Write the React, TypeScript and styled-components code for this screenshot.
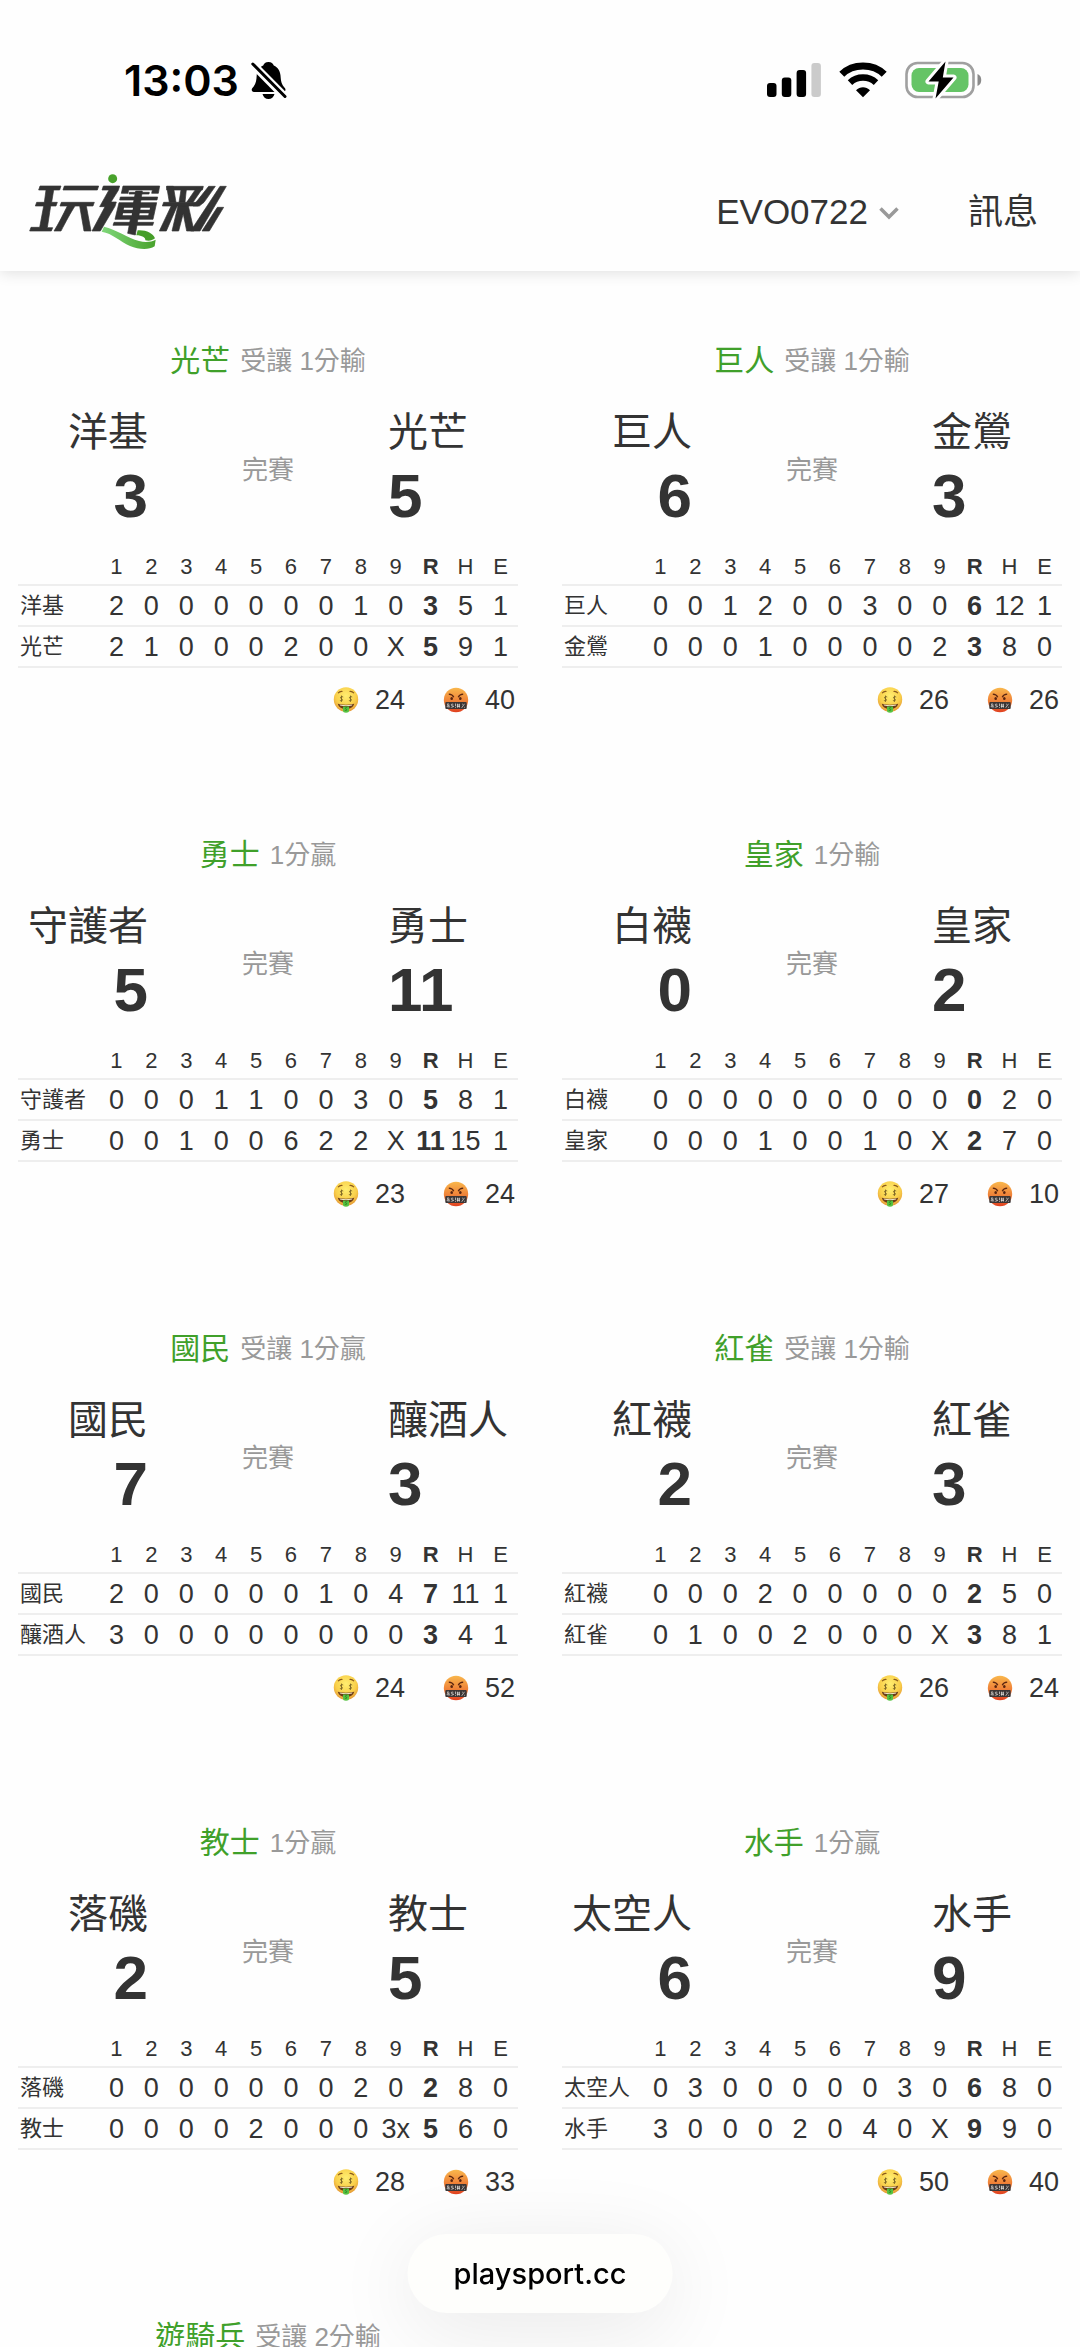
import React from "react";
import styled, { createGlobalStyle } from "styled-components";

const GlobalStyle = createGlobalStyle`
  *, *::before, *::after { box-sizing: border-box; }
  body {
    margin: 0;
    background: #fefefe;
    color: #333;
    font-family: "Liberation Sans", "Noto Sans CJK TC", sans-serif;
  }
  button { font: inherit; color: inherit; border: 0; padding: 0; background: none; cursor: pointer; }
  a { color: inherit; text-decoration: none; }
  svg { display: block; }
`;

/* ---------- data ---------- */

type Line = { team: string; innings: string[]; rhe: [string, string, string] };
type Game = {
  pick: string;
  spread: string;
  away?: Line;
  home?: Line;
  wins?: number;
  losses?: number;
};

const line = (team: string, innings: string, rhe: string): Line => ({
  team,
  innings: innings.split(" "),
  rhe: rhe.split(" ") as [string, string, string],
});

const games: Game[] = [
  {
    pick: "光芒", spread: "受讓 1分輸", wins: 24, losses: 40,
    away: line("洋基", "2 0 0 0 0 0 0 1 0", "3 5 1"),
    home: line("光芒", "2 1 0 0 0 2 0 0 X", "5 9 1"),
  },
  {
    pick: "巨人", spread: "受讓 1分輸", wins: 26, losses: 26,
    away: line("巨人", "0 0 1 2 0 0 3 0 0", "6 12 1"),
    home: line("金鶯", "0 0 0 1 0 0 0 0 2", "3 8 0"),
  },
  {
    pick: "勇士", spread: "1分贏", wins: 23, losses: 24,
    away: line("守護者", "0 0 0 1 1 0 0 3 0", "5 8 1"),
    home: line("勇士", "0 0 1 0 0 6 2 2 X", "11 15 1"),
  },
  {
    pick: "皇家", spread: "1分輸", wins: 27, losses: 10,
    away: line("白襪", "0 0 0 0 0 0 0 0 0", "0 2 0"),
    home: line("皇家", "0 0 0 1 0 0 1 0 X", "2 7 0"),
  },
  {
    pick: "國民", spread: "受讓 1分贏", wins: 24, losses: 52,
    away: line("國民", "2 0 0 0 0 0 1 0 4", "7 11 1"),
    home: line("釀酒人", "3 0 0 0 0 0 0 0 0", "3 4 1"),
  },
  {
    pick: "紅雀", spread: "受讓 1分輸", wins: 26, losses: 24,
    away: line("紅襪", "0 0 0 2 0 0 0 0 0", "2 5 0"),
    home: line("紅雀", "0 1 0 0 2 0 0 0 X", "3 8 1"),
  },
  {
    pick: "教士", spread: "1分贏", wins: 28, losses: 33,
    away: line("落磯", "0 0 0 0 0 0 0 2 0", "2 8 0"),
    home: line("教士", "0 0 0 0 2 0 0 0 3x", "5 6 0"),
  },
  {
    pick: "水手", spread: "1分贏", wins: 50, losses: 40,
    away: line("太空人", "0 3 0 0 0 0 0 3 0", "6 8 0"),
    home: line("水手", "3 0 0 0 2 0 4 0 X", "9 9 0"),
  },
  { pick: "遊騎兵", spread: "受讓 2分輸" },
];

const inningLabels = ["1", "2", "3", "4", "5", "6", "7", "8", "9"];

/* ---------- layout ---------- */

const Screen = styled.div`
  height: 100vh;
  display: flex;
  flex-direction: column;
  overflow: hidden;
`;

const StatusBar = styled.div`
  display: flex;
  align-items: center;
  justify-content: space-between;
  height: 160px;
  padding: 0 97px 0 124px;
  color: #000;
`;

const StatusGroup = styled.div<{ $gap: number }>`
  display: flex;
  align-items: center;
  gap: ${(p) => p.$gap}px;
`;

const Clock = styled.time`
  font: 600 43px/48px Inter, sans-serif;
`;

const Header = styled.header`
  position: relative;
  z-index: 1;
  background: #fefefe;
  box-shadow: 0 2px 14px rgba(0, 0, 0, 0.12);
`;

const NavBar = styled.nav`
  display: flex;
  align-items: center;
  height: 111px;
  padding: 0 42px 8px 29px;
  font-size: 35px;
  line-height: 48px;
`;

const LogoLink = styled.a`
  display: block;
  margin-right: auto;
`;

const AccountButton = styled.button`
  display: flex;
  align-items: center;
  gap: 11px;
  margin-right: 69px;
`;

const Scroller = styled.main`
  flex: 1;
  min-height: 0;
  overflow: hidden auto;
  scrollbar-width: none;
  padding: 70px 18px 0;
`;

const GameGrid = styled.div`
  display: grid;
  grid-template-columns: repeat(2, minmax(0, 1fr));
  column-gap: 44px;
  row-gap: 115px;
`;

const Card = styled.article`
  min-width: 0;
`;

const PickLine = styled.p`
  display: flex;
  align-items: center;
  justify-content: center;
  gap: 10px;
  margin: 0 0 25px;
  font-size: 26px;
  line-height: 40px;
  color: #999;
`;

const PickTeam = styled.strong`
  font-size: 30px;
  font-weight: 400;
  color: #40a02a;
`;

const Matchup = styled.div`
  display: grid;
  grid-template-columns: 26% 48% 26%;
  align-items: center;
  margin-bottom: 18px;
`;

const Side = styled.div<{ $align: "left" | "right" }>`
  display: flex;
  flex-direction: column;
  align-items: ${(p) => (p.$align === "right" ? "flex-end" : "flex-start")};
  white-space: nowrap;
`;

const TeamName = styled.span`
  font-size: 40px;
  line-height: 52px;
`;

const Score = styled.span`
  font-size: 62px;
  font-weight: 700;
  line-height: 76px;
`;

const GameState = styled.span`
  font-size: 26px;
  line-height: 40px;
  text-align: center;
  color: #999;
`;

const LineScore = styled.table`
  width: 100%;
  table-layout: fixed;
  border-collapse: collapse;
`;

const TeamCol = styled.col`
  width: 81px;
`;

const Row = styled.tr`
  border-bottom: 2px solid #eee;
`;

const HeadCell = styled.th<{ $strong?: boolean }>`
  height: 33px;
  padding: 0 0 2px;
  font-size: 22px;
  font-weight: ${(p) => (p.$strong ? 700 : 400)};
  line-height: 28px;
`;

const TeamCell = styled.th`
  padding: 0 0 0 2px;
  font-size: 22px;
  font-weight: 400;
  line-height: 38px;
  text-align: left;
  white-space: nowrap;
`;

const Cell = styled.td<{ $strong?: boolean }>`
  height: 41px;
  padding: 0;
  font-size: 27px;
  font-weight: ${(p) => (p.$strong ? 700 : 400)};
  line-height: 38px;
  text-align: center;
  white-space: nowrap;
`;

const Reactions = styled.div`
  display: flex;
  justify-content: flex-end;
  gap: 38px;
  margin-top: 12px;
  padding-right: 3px;
`;

const Reaction = styled.span`
  display: flex;
  align-items: center;
  gap: 16px;
  font-size: 27px;
  line-height: 40px;
`;

const AddressPill = styled.button`
  position: fixed;
  z-index: 2;
  left: 50%;
  bottom: 34px;
  transform: translateX(-50%);
  padding: 0 46px;
  border-radius: 40px;
  background: #fefefc;
  box-shadow: 0 14px 84px rgba(0, 0, 0, 0.09);
  && {
    color: #000;
    font: 500 29px/79px Inter, sans-serif;
  }
`;

/* ---------- icons ---------- */

const BellOff = () => (
  <svg width="36" height="38" viewBox="0 0 36 38" aria-label="靜音">
    <path
      d="M17.5 1c3 0 4.600 1.700 5.300 3.600C27 6.500 29 10 29.500 14.500c.5 6 .8 8.500 4.300 12.500 1.400 1.600.6 4-1.600 4H3c-2.300 0-3-2.400-1.600-4 3.300-3.700 4-6.500 4.300-12.500C6 10 8 6.500 12.200 4.600 12.900 2.700 14.500 1 17.500 1zM11.500 33h12c-.8 3-3 5-6 5s-5.200-2-6-5z"
      fill="#000"
    />
    <path d="M-1 .5 34 36" stroke="#fefefe" strokeWidth="8" />
    <path d="M1.800 3 34 35.500" stroke="#000" strokeWidth="3" strokeLinecap="round" />
  </svg>
);

const Signal = () => (
  <svg width="54" height="36" viewBox="0 0 54 36" aria-label="訊號">
    <rect x="0" y="21" width="9.500" height="14" rx="3" />
    <rect x="14.800" y="15.500" width="9.500" height="19.500" rx="3" />
    <rect x="29.600" y="8" width="9.500" height="27" rx="3" />
    <rect x="44.400" y="1" width="9.500" height="34" rx="3" fill="#cbcbcb" />
  </svg>
);

const Wifi = () => (
  <svg width="48" height="36" viewBox="0 0 48 36" aria-label="Wi-Fi">
    <g fill="none" stroke="#000">
      <path d="M2.800 12.300C8.500 6.600 16 4 24 4s15.500 2.600 21.200 8.300" strokeWidth="7" />
      <path d="M11 20.600c3.500-3.300 8-5.100 13-5.100s9.500 1.800 13 5.100" strokeWidth="6.500" />
    </g>
    <path d="M17 28.200c4-3.900 10-3.900 14 0L24 35.200z" />
  </svg>
);

const Battery = () => (
  <svg width="78" height="40" viewBox="0 0 78 40" aria-label="充電中">
    <rect x="1.500" y="3" width="67" height="34" rx="11" fill="none" stroke="#a0a0a0" strokeWidth="2.600" />
    <path d="M72.500 14c5 1.500 5 10.500 0 12z" fill="#8a8a8a" />
    <rect x="6.500" y="8" width="57" height="24" rx="7.500" fill="#65c466" />
    <path
      d="M40.500 1.500 23.500 21.500h10.200L30.500 38.500 48.500 17.500h-10.700z"
      fill="#000"
      stroke="#fefefe"
      strokeWidth="6"
      strokeLinejoin="round"
      paintOrder="stroke"
    />
  </svg>
);

const Chevron = () => (
  <svg width="20" height="18" viewBox="0 0 20 18" aria-hidden="true">
    <path d="M1.500 5.500 10 14 18.500 5.500" fill="none" stroke="#999" strokeWidth="3.500" />
  </svg>
);

const Logo = () => (
  <svg width="200" height="78" viewBox="27 36 600 234" role="img" aria-label="玩運彩">
    <defs>
      <linearGradient id="ribbon" x1="0" x2="1">
        <stop offset="0" stopColor="#7fd77a" />
        <stop offset="1" stopColor="#48a22b" />
      </linearGradient>
    </defs>
    <g fill="#333" stroke="#333" strokeWidth="2" strokeLinejoin="round">
      <path d="M60 75h63l-4 12h-18l-6 37h17l-4 11H92l-10 65h16l-4 10H29l4-11h26l12-64H46l4-11h23l5-37H56z" />
      <path d="M133 75h103l-4 12H129z" />
      <path d="M124 124h99l-4 11h-20l14 75h-21l-13-75h-14c-12 18-28 48-42 75h-21c14-22 28-51 40-75h-22z" />
      <path d="M250 75h49l-4 13-22 35h16l-4 13-44 74h-25l39-73h-16l28-50h-21z" />
      <path d="M309 75h110l-4 22h-20l2-10h-71l-2 10h-20z" />
      <path d="M328 94h60l-1 5h-60z" />
      <path d="M301 108h112l-2 9H299z" />
      <path d="M297 125h113l-11 50H285z" />
      <path d="M282 184h119l-3 9H279z" />
      <path d="M347 90h20l-21 132-23-5z" />
      <path d="M440 76h110l-3 11H440z" />
      <path d="M440 76h20l8 48h-20zM483 86h16l-4 38h-18zM530 80h19l-30 44h-19z" />
      <path d="M431 124h108l-4 11H427z" />
      <path d="M454 134h18l-33 76h-21zM474 134h22l-20 76h-20zM485 134h20l17 76h-22z" />
      <path d="M566 76h20l-34 48-14 11h-19z" />
      <path d="M600 76h19l-79 134h-28zM592 139h19l-43 71h-22z" />
    </g>
    <g fill="#fefefe">
      <path d="M312 140h27l-1 6h-27zM362 140h28l-1 6h-28zM309 157h27l-1 6h-27zM359 157h27l-1 6h-27z" />
    </g>
    <circle cx="278" cy="53" r="13.500" fill="#48a22b" />
    <path
      d="M252 197c36 8 72 34 105 43 19 5 37 3 50-4l-3 20c-18 12-48 10-74-1-30-13-52-38-85-43z"
      fill="url(#ribbon)"
    />
    <path d="M353 208c24-2 46 8 52 24-8 7-18 8-29 6 1-8-10-15-27-15z" fill="#459d28" />
  </svg>
);

const MoneyFace = () => (
  <svg width="26" height="26" viewBox="0 0 26 26" role="img" aria-label="命中">
    <defs>
      <radialGradient id="gold" cx=".5" cy=".35" r=".65">
        <stop offset="0" stopColor="#ffee70" />
        <stop offset=".65" stopColor="#f9cf4a" />
        <stop offset="1" stopColor="#e59a38" />
      </radialGradient>
    </defs>
    <circle cx="13" cy="12.500" r="12.200" fill="url(#gold)" />
    <path d="M5 6.200q2-2.200 4.500-1.700M16.500 4.500q2.500-.5 4.500 1.700" fill="none" stroke="#8a5a1c" strokeWidth="1.100" />
    <g fill="none" stroke="#7a6426" strokeWidth=".9">
      <path d="M10.200 10c-2.600-1.200-3.600 1-1.800 1.700s1.300 2.900-1.500 1.800M8.500 8.600v6.200M19.200 10c-2.600-1.200-3.600 1-1.800 1.700s1.300 2.900-1.500 1.800M17.500 8.600v6.200" />
    </g>
    <path d="M4.800 16.800q8.200 1.800 16.400 0c-1 3.800-4 5.200-8.200 5.200s-7.200-1.400-8.200-5.200z" fill="#6b3a17" />
    <path d="M6.500 17.500q6.500 1.300 13 0l-.6 1q-6 1-11.800 0z" fill="#f6ecd0" />
    <path d="M10 19.500h6v4q0 2.200-3 2.200t-3-2.200z" fill="#56c341" />
    <path d="M14.200 20.800c-2-.8-2.500.8-1.200 1.200s1 2-1.200 1.200" fill="none" stroke="#2b7d22" strokeWidth=".9" />
  </svg>
);

const AngryFace = () => (
  <svg width="26" height="26" viewBox="0 0 26 26" role="img" aria-label="未中">
    <defs>
      <linearGradient id="rage" x1="0" y1="0" x2="0" y2="1">
        <stop offset="0" stopColor="#f9b74c" />
        <stop offset=".55" stopColor="#ef8138" />
        <stop offset="1" stopColor="#e0401f" />
      </linearGradient>
    </defs>
    <circle cx="13" cy="13" r="12.200" fill="url(#rage)" />
    <path d="M5.800 7.200q3.700.4 5 3M20.200 7.200q-3.700.4-5 3" fill="none" stroke="#5a2410" strokeWidth="1.200" />
    <ellipse cx="8.700" cy="11.500" rx="1.300" ry="1.500" fill="#5a2410" />
    <ellipse cx="17.300" cy="11.500" rx="1.300" ry="1.500" fill="#5a2410" />
    <rect x="2.300" y="15" width="21.400" height="7" rx="1" fill="#3b3636" />
    <path
      d="M6.800 20.500 4.300 17.200q1.200-1.400 1.500.3l-1.800 2q1.200 1.600 2.700-.8M10.300 17.300q-2-.8-2 .5t2 1.300-2 1.300M12.500 16.500v2.700M12.500 20v.8M14.500 16.700v4M16.300 16.700v4M13.800 18h3.200M13.800 19.500h3.200M21.500 16.800l-2.800 4M19 17.200h.8M21 20.300h.8"
      fill="none"
      stroke="#e8e4e0"
      strokeWidth=".7"
    />
  </svg>
);

/* ---------- components ---------- */

const ScoreRow = ({ data }: { data: Line }) => (
  <Row>
    <TeamCell scope="row">{data.team}</TeamCell>
    {data.innings.map((runs, i) => (
      <Cell key={i}>{runs}</Cell>
    ))}
    {data.rhe.map((value, i) => (
      <Cell key={i} $strong={i === 0}>{value}</Cell>
    ))}
  </Row>
);

const GameCard = ({ game }: { game: Game }) => (
  <Card>
    <PickLine>
      <PickTeam>{game.pick}</PickTeam>
      <span>{game.spread}</span>
    </PickLine>
    {game.away && game.home && (
      <>
        <Matchup>
          <Side $align="right">
            <TeamName>{game.away.team}</TeamName>
            <Score>{game.away.rhe[0]}</Score>
          </Side>
          <GameState>完賽</GameState>
          <Side $align="left">
            <TeamName>{game.home.team}</TeamName>
            <Score>{game.home.rhe[0]}</Score>
          </Side>
        </Matchup>
        <LineScore>
          <colgroup>
            <TeamCol />
            <col span={12} />
          </colgroup>
          <thead>
            <Row>
              <HeadCell as="td" />
              {[...inningLabels, "R", "H", "E"].map((label) => (
                <HeadCell key={label} scope="col" $strong={label === "R"}>{label}</HeadCell>
              ))}
            </Row>
          </thead>
          <tbody>
            <ScoreRow data={game.away} />
            <ScoreRow data={game.home} />
          </tbody>
        </LineScore>
        <Reactions>
          <Reaction><MoneyFace />{game.wins}</Reaction>
          <Reaction><AngryFace />{game.losses}</Reaction>
        </Reactions>
      </>
    )}
  </Card>
);

export default function App() {
  return (
    <Screen>
      <GlobalStyle />
      <Header>
        <StatusBar>
          <StatusGroup $gap={12}>
            <Clock>13:03</Clock>
            <BellOff />
          </StatusGroup>
          <StatusGroup $gap={18}>
            <Signal />
            <Wifi />
            <Battery />
          </StatusGroup>
        </StatusBar>
        <NavBar>
          <LogoLink href="#"><Logo /></LogoLink>
          <AccountButton type="button">EVO0722<Chevron /></AccountButton>
          <a href="#">訊息</a>
        </NavBar>
      </Header>
      <Scroller>
        <GameGrid>
          {games.map((game, i) => (
            <GameCard key={i} game={game} />
          ))}
        </GameGrid>
      </Scroller>
      <AddressPill type="button">playsport.cc</AddressPill>
    </Screen>
  );
}
